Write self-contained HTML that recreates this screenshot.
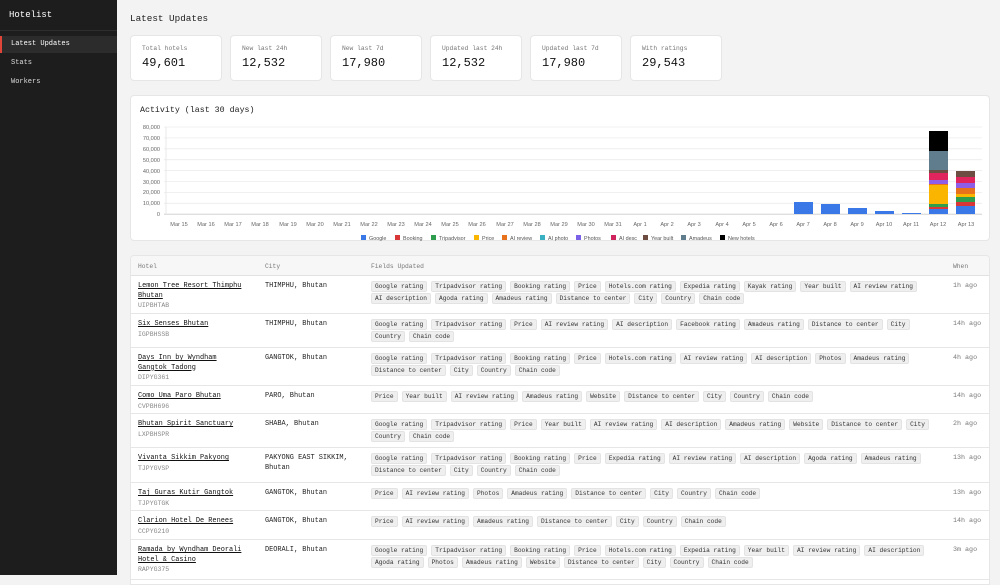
<!DOCTYPE html>
<html><head><meta charset="utf-8"><style>
*{box-sizing:border-box;margin:0;padding:0}
body{width:1000px;height:575px;overflow:hidden;background:#f3f3f3;font-family:"Liberation Mono",monospace;color:#222;position:relative}
.side{position:absolute;left:0;top:0;width:117px;height:575px;background:#1d1d1d;color:#eee}
.side .brand{position:absolute;left:9px;top:10px;font-size:9px;color:#fff}
.side .hr{position:absolute;left:0;top:30px;width:117px;height:1px;background:#2e2e2e}
.side .it{position:absolute;left:0;width:117px;height:17px;font-size:7px;line-height:17px;padding-left:11px;color:#ddd}
.side .act{background:#2c2c2c;border-left:2px solid #e0453a;padding-left:9px;color:#fff}
h1{position:absolute;left:130px;top:13px;font-size:9.3px;font-weight:normal;color:#222}
.card{position:absolute;background:#fff;border:1px solid #e6e6e6;border-radius:4px}
.stat .l{position:absolute;left:11px;top:9px;font-size:6.3px;color:#777}
.stat .v{position:absolute;left:11px;top:20px;font-size:12px;color:#111}
.ch{left:130px;top:95px;width:860px;height:146px}
.tb{left:130px;top:255px;width:860px;height:330px;border-radius:4px 4px 0 0;overflow:hidden}
.hd{position:absolute;left:0;top:0;width:860px;height:20px;background:#f7f7f7;border-bottom:1px solid #e2e2e2;font-size:6.3px;color:#777}
.hd span{position:absolute;top:7px}
.row{position:absolute;left:0;width:860px;border-bottom:1px solid #e6e6e6}
.nm{position:absolute;left:7px;top:6px;width:108px;font-size:6.9px;line-height:9.5px;color:#111}
.nm u{text-decoration:underline}
.cd{display:block;color:#888;font-size:6.5px}
.ct{position:absolute;left:134px;top:6px;width:100px;font-size:6.9px;line-height:9.5px;color:#222}
.fl{position:absolute;left:240px;top:5px;width:580px}
.ln{height:12px;white-space:nowrap}
.t{display:inline-block;font-size:6.2px;line-height:9px;height:11px;padding:0 3px;background:#efefef;border:1px solid #e3e3e3;border-radius:2px;margin-right:4px;color:#333;vertical-align:top}
.wh{position:absolute;left:822px;top:6px;font-size:6.7px;color:#777}
</style></head><body>
<div class="side">
<div class="brand">Hotelist</div><div class="hr"></div>
<div class="it act" style="top:36px">Latest Updates</div>
<div class="it" style="top:55px">Stats</div>
<div class="it" style="top:74px">Workers</div>
</div>
<h1>Latest Updates</h1>
<div class="card stat" style="left:130px;top:35px;width:92px;height:46px"><div class="l">Total hotels</div><div class="v">49,601</div></div>
<div class="card stat" style="left:230px;top:35px;width:92px;height:46px"><div class="l">New last 24h</div><div class="v">12,532</div></div>
<div class="card stat" style="left:330px;top:35px;width:92px;height:46px"><div class="l">New last 7d</div><div class="v">17,980</div></div>
<div class="card stat" style="left:430px;top:35px;width:92px;height:46px"><div class="l">Updated last 24h</div><div class="v">12,532</div></div>
<div class="card stat" style="left:530px;top:35px;width:92px;height:46px"><div class="l">Updated last 7d</div><div class="v">17,980</div></div>
<div class="card stat" style="left:630px;top:35px;width:92px;height:46px"><div class="l">With ratings</div><div class="v">29,543</div></div>

<div class="card ch">
<svg width="860" height="146" viewBox="130 95 860 146" style="position:absolute;left:-1px;top:-1px">
<text x="140" y="112" font-family="Liberation Mono" font-size="8.3" fill="#222">Activity (last 30 days)</text>
<g stroke="#ececec" stroke-width="0.8">
<line x1="164" x2="982" y1="127" y2="127"/><line x1="164" x2="982" y1="137.9" y2="137.9"/><line x1="164" x2="982" y1="148.8" y2="148.8"/><line x1="164" x2="982" y1="159.7" y2="159.7"/><line x1="164" x2="982" y1="170.6" y2="170.6"/><line x1="164" x2="982" y1="181.5" y2="181.5"/><line x1="164" x2="982" y1="192.4" y2="192.4"/><line x1="164" x2="982" y1="203.3" y2="203.3"/></g>
<line x1="164" x2="982" y1="214.2" y2="214.2" stroke="#ccc" stroke-width="0.8"/>
<line x1="166" x2="166" y1="127" y2="214" stroke="#e4e4e4" stroke-width="0.8"/>
<g font-family="Liberation Sans" font-size="5.6" fill="#666" text-anchor="end">
<text x="160" y="129">80,000</text><text x="160" y="140">70,000</text><text x="160" y="151">60,000</text><text x="160" y="162">50,000</text><text x="160" y="173">40,000</text><text x="160" y="184">30,000</text><text x="160" y="194">20,000</text><text x="160" y="205">10,000</text><text x="160" y="216">0</text></g>
<g font-family="Liberation Sans" font-size="5.6" fill="#666" text-anchor="middle">
<text x="179" y="226">Mar 15</text><text x="206" y="226">Mar 16</text><text x="233" y="226">Mar 17</text><text x="260" y="226">Mar 18</text><text x="288" y="226">Mar 19</text><text x="315" y="226">Mar 20</text><text x="342" y="226">Mar 21</text><text x="369" y="226">Mar 22</text><text x="396" y="226">Mar 23</text><text x="423" y="226">Mar 24</text><text x="450" y="226">Mar 25</text><text x="477" y="226">Mar 26</text><text x="505" y="226">Mar 27</text><text x="532" y="226">Mar 28</text><text x="559" y="226">Mar 29</text><text x="586" y="226">Mar 30</text><text x="613" y="226">Mar 31</text><text x="640" y="226">Apr 1</text><text x="667" y="226">Apr 2</text><text x="694" y="226">Apr 3</text><text x="722" y="226">Apr 4</text><text x="749" y="226">Apr 5</text><text x="776" y="226">Apr 6</text><text x="803" y="226">Apr 7</text><text x="830" y="226">Apr 8</text><text x="857" y="226">Apr 9</text><text x="884" y="226">Apr 10</text><text x="911" y="226">Apr 11</text><text x="938" y="226">Apr 12</text><text x="966" y="226">Apr 13</text></g>
<rect x="794" y="202" width="19" height="12" fill="#3b78e7"/>
<rect x="821" y="204" width="19" height="10" fill="#3b78e7"/>
<rect x="848" y="208" width="19" height="6" fill="#3b78e7"/>
<rect x="875" y="211" width="19" height="3" fill="#3b78e7"/>
<rect x="902" y="213" width="19" height="1" fill="#3b78e7"/>
<rect x="929" y="131" width="19" height="20" fill="#000"/>
<rect x="929" y="151" width="19" height="19" fill="#5f7d8c"/>
<rect x="929" y="170" width="19" height="3" fill="#6d4c41"/>
<rect x="929" y="173" width="19" height="7" fill="#e0245e"/>
<rect x="929" y="180" width="19" height="4" fill="#8e5ee8"/>
<rect x="929" y="184" width="19" height="1" fill="#e8711c"/>
<rect x="929" y="185" width="19" height="19" fill="#f9b500"/>
<rect x="929" y="204" width="19" height="3" fill="#2e9d4d"/>
<rect x="929" y="207" width="19" height="2" fill="#d93737"/>
<rect x="929" y="209" width="19" height="5" fill="#3b78e7"/>
<rect x="956" y="171" width="19" height="6" fill="#6d4c41"/>
<rect x="956" y="177" width="19" height="6" fill="#e0245e"/>
<rect x="956" y="183" width="19" height="5" fill="#8e5ee8"/>
<rect x="956" y="188" width="19" height="6" fill="#e8711c"/>
<rect x="956" y="194" width="19" height="3" fill="#f9b500"/>
<rect x="956" y="197" width="19" height="5" fill="#2e9d4d"/>
<rect x="956" y="202" width="19" height="4" fill="#d93737"/>
<rect x="956" y="206" width="19" height="8" fill="#3b78e7"/>
<g font-family="Liberation Sans" font-size="5.4" fill="#555">
<rect x="361" y="235" width="5" height="5" fill="#3b78e7"/><text x="369" y="240">Google</text>
<rect x="395" y="235" width="5" height="5" fill="#d93737"/><text x="403" y="240">Booking</text>
<rect x="431" y="235" width="5" height="5" fill="#2e9d4d"/><text x="439" y="240">Tripadvisor</text>
<rect x="474" y="235" width="5" height="5" fill="#f9b500"/><text x="482" y="240">Price</text>
<rect x="502" y="235" width="5" height="5" fill="#e8711c"/><text x="510" y="240">AI review</text>
<rect x="540" y="235" width="5" height="5" fill="#3ab0c3"/><text x="548" y="240">AI photo</text>
<rect x="576" y="235" width="5" height="5" fill="#7b61e8"/><text x="584" y="240">Photos</text>
<rect x="611" y="235" width="5" height="5" fill="#d0245e"/><text x="619" y="240">AI desc</text>
<rect x="643" y="235" width="5" height="5" fill="#6d4c41"/><text x="651" y="240">Year built</text>
<rect x="681" y="235" width="5" height="5" fill="#5f7d8c"/><text x="689" y="240">Amadeus</text>
<rect x="720" y="235" width="5" height="5" fill="#000"/><text x="728" y="240">New hotels</text>
</g></svg>
</div>

<div class="card tb">
<div class="hd"><span style="left:7px">Hotel</span><span style="left:134px">City</span><span style="left:240px">Fields Updated</span><span style="left:822px">When</span></div>

<div class="row" style="top:20px;height:38px"><div class="nm"><u>Lemon Tree Resort Thimphu Bhutan</u><span class="cd">UIPBHTAB</span></div><div class="ct">THIMPHU, Bhutan</div>
<div class="fl"><div class="ln"><span class="t">Google rating</span><span class="t">Tripadvisor rating</span><span class="t">Booking rating</span><span class="t">Price</span><span class="t">Hotels.com rating</span><span class="t">Expedia rating</span><span class="t">Kayak rating</span><span class="t">Year built</span><span class="t">AI review rating</span></div><div class="ln"><span class="t">AI description</span><span class="t">Agoda rating</span><span class="t">Amadeus rating</span><span class="t">Distance to center</span><span class="t">City</span><span class="t">Country</span><span class="t">Chain code</span></div></div><div class="wh">1h ago</div></div>

<div class="row" style="top:58px;height:34px"><div class="nm"><u>Six Senses Bhutan</u><span class="cd">IGPBHSSB</span></div><div class="ct">THIMPHU, Bhutan</div>
<div class="fl"><div class="ln"><span class="t">Google rating</span><span class="t">Tripadvisor rating</span><span class="t">Price</span><span class="t">AI review rating</span><span class="t">AI description</span><span class="t">Facebook rating</span><span class="t">Amadeus rating</span><span class="t">Distance to center</span><span class="t">City</span></div><div class="ln"><span class="t">Country</span><span class="t">Chain code</span></div></div><div class="wh">14h ago</div></div>

<div class="row" style="top:92px;height:38px"><div class="nm"><u>Days Inn by Wyndham Gangtok Tadong</u><span class="cd">DIPYG361</span></div><div class="ct">GANGTOK, Bhutan</div>
<div class="fl"><div class="ln"><span class="t">Google rating</span><span class="t">Tripadvisor rating</span><span class="t">Booking rating</span><span class="t">Price</span><span class="t">Hotels.com rating</span><span class="t">AI review rating</span><span class="t">AI description</span><span class="t">Photos</span><span class="t">Amadeus rating</span></div><div class="ln"><span class="t">Distance to center</span><span class="t">City</span><span class="t">Country</span><span class="t">Chain code</span></div></div><div class="wh">4h ago</div></div>

<div class="row" style="top:130px;height:28px"><div class="nm"><u>Como Uma Paro Bhutan</u><span class="cd">CVPBH696</span></div><div class="ct">PARO, Bhutan</div>
<div class="fl"><div class="ln"><span class="t">Price</span><span class="t">Year built</span><span class="t">AI review rating</span><span class="t">Amadeus rating</span><span class="t">Website</span><span class="t">Distance to center</span><span class="t">City</span><span class="t">Country</span><span class="t">Chain code</span></div></div><div class="wh">14h ago</div></div>

<div class="row" style="top:158px;height:34px"><div class="nm"><u>Bhutan Spirit Sanctuary</u><span class="cd">LXPBHSPR</span></div><div class="ct">SHABA, Bhutan</div>
<div class="fl"><div class="ln"><span class="t">Google rating</span><span class="t">Tripadvisor rating</span><span class="t">Price</span><span class="t">Year built</span><span class="t">AI review rating</span><span class="t">AI description</span><span class="t">Amadeus rating</span><span class="t">Website</span><span class="t">Distance to center</span><span class="t">City</span></div><div class="ln"><span class="t">Country</span><span class="t">Chain code</span></div></div><div class="wh">2h ago</div></div>

<div class="row" style="top:192px;height:35px"><div class="nm"><u>Vivanta Sikkim Pakyong</u><span class="cd">TJPYGVSP</span></div><div class="ct">PAKYONG EAST SIKKIM, Bhutan</div>
<div class="fl"><div class="ln"><span class="t">Google rating</span><span class="t">Tripadvisor rating</span><span class="t">Booking rating</span><span class="t">Price</span><span class="t">Expedia rating</span><span class="t">AI review rating</span><span class="t">AI description</span><span class="t">Agoda rating</span><span class="t">Amadeus rating</span></div><div class="ln"><span class="t">Distance to center</span><span class="t">City</span><span class="t">Country</span><span class="t">Chain code</span></div></div><div class="wh">13h ago</div></div>

<div class="row" style="top:227px;height:28px"><div class="nm"><u>Taj Guras Kutir Gangtok</u><span class="cd">TJPYGTGK</span></div><div class="ct">GANGTOK, Bhutan</div>
<div class="fl"><div class="ln"><span class="t">Price</span><span class="t">AI review rating</span><span class="t">Photos</span><span class="t">Amadeus rating</span><span class="t">Distance to center</span><span class="t">City</span><span class="t">Country</span><span class="t">Chain code</span></div></div><div class="wh">13h ago</div></div>

<div class="row" style="top:255px;height:29px"><div class="nm"><u>Clarion Hotel De Renees</u><span class="cd">CCPYG210</span></div><div class="ct">GANGTOK, Bhutan</div>
<div class="fl"><div class="ln"><span class="t">Price</span><span class="t">AI review rating</span><span class="t">Amadeus rating</span><span class="t">Distance to center</span><span class="t">City</span><span class="t">Country</span><span class="t">Chain code</span></div></div><div class="wh">14h ago</div></div>

<div class="row" style="top:284px;height:40px"><div class="nm"><u>Ramada by Wyndham Deorali Hotel &amp; Casino</u><span class="cd">RAPYG375</span></div><div class="ct">DEORALI, Bhutan</div>
<div class="fl"><div class="ln"><span class="t">Google rating</span><span class="t">Tripadvisor rating</span><span class="t">Booking rating</span><span class="t">Price</span><span class="t">Hotels.com rating</span><span class="t">Expedia rating</span><span class="t">Year built</span><span class="t">AI review rating</span><span class="t">AI description</span></div><div class="ln"><span class="t">Agoda rating</span><span class="t">Photos</span><span class="t">Amadeus rating</span><span class="t">Website</span><span class="t">Distance to center</span><span class="t">City</span><span class="t">Country</span><span class="t">Chain code</span></div></div><div class="wh">3m ago</div></div>
</div>
</body></html>
